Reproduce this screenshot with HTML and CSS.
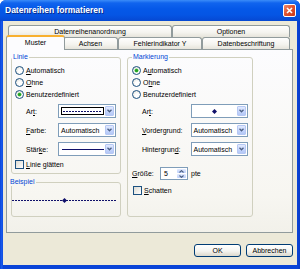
FILE: index.html
```html
<!DOCTYPE html>
<html lang="de">
<head>
    <meta charset="UTF-8">
    <title>Datenreihen formatieren</title>
    <link rel="stylesheet" href="styles.css">
</head>
<body>
    <div class="window">
        <div class="titlebar">
            <span class="title">Datenreihen formatieren</span>
            <div class="close">
                <svg width="7" height="7" viewBox="0 0 7 7"><path d="M1 1L6 6M6 1L1 6" stroke="#fff" stroke-width="1.6"/></svg>
            </div>
        </div>

        <div class="client">
            <div class="tabs">
                <div class="tab-row">
                    <div class="tab w-anordnung">Datenreihenanordnung</div>
                    <div class="tab w-optionen">Optionen</div>
                </div>
                <div class="tab-row">
                    <div class="tab active w-muster">Muster</div>
                    <div class="tab w-achsen">Achsen</div>
                    <div class="tab w-fehler">Fehlerindikator Y</div>
                    <div class="tab w-beschr">Datenbeschriftung</div>
                </div>
            </div>

            <div class="panel">
                <div class="col-left">
                    <fieldset class="group g-linie">
                        <legend>Linie</legend>
                        <div class="opt"><span class="radio"></span><span><u>A</u>utomatisch</span></div>
                        <div class="opt"><span class="radio"></span><span><u>O</u>hne</span></div>
                        <div class="opt"><span class="radio checked"></span><span>Benutzerdefiniert</span></div>

                        <div class="field first">
                            <span class="lbl">Ar<u>t</u>:</span>
                            <div class="combo">
                                <div class="val"><div class="focus"><div class="dots"></div></div></div>
                                <div class="drop"><svg width="5" height="4" viewBox="0 0 5 4"><path d="M0.5 0.8L2.5 2.8L4.5 0.8" fill="none" stroke="#4d6185" stroke-width="1.3"/></svg></div>
                            </div>
                        </div>
                        <div class="field">
                            <span class="lbl"><u>F</u>arbe:</span>
                            <div class="combo">
                                <div class="val">Automatisch</div>
                                <div class="drop"><svg width="5" height="4" viewBox="0 0 5 4"><path d="M0.5 0.8L2.5 2.8L4.5 0.8" fill="none" stroke="#4d6185" stroke-width="1.3"/></svg></div>
                            </div>
                        </div>
                        <div class="field">
                            <span class="lbl">Stär<u>k</u>e:</span>
                            <div class="combo">
                                <div class="val"><div class="solid"></div></div>
                                <div class="drop"><svg width="5" height="4" viewBox="0 0 5 4"><path d="M0.5 0.8L2.5 2.8L4.5 0.8" fill="none" stroke="#4d6185" stroke-width="1.3"/></svg></div>
                            </div>
                        </div>

                        <div class="opt check-row"><span class="check"></span><span><u>L</u>inie glätten</span></div>
                    </fieldset>

                    <fieldset class="group g-beispiel">
                        <legend>Beispiel</legend>
                        <div class="sample">
                            <div class="sample-line"></div>
                            <svg class="sample-mark" width="5" height="5" viewBox="0 0 5 5"><path d="M2.5 0L5 2.5L2.5 5L0 2.5Z" fill="#10106a"/></svg>
                        </div>
                    </fieldset>
                </div>

                <fieldset class="group g-mark">
                    <legend>Markierung</legend>
                    <div class="opt"><span class="radio checked"></span><span>A<u>u</u>tomatisch</span></div>
                    <div class="opt"><span class="radio"></span><span>O<u>h</u>ne</span></div>
                    <div class="opt"><span class="radio"></span><span>Benutzerdefiniert</span></div>

                    <div class="field first">
                        <span class="lbl">Ar<u>t</u>:</span>
                        <div class="combo">
                            <div class="val center"><svg width="5" height="5" viewBox="0 0 5 5"><path d="M2.5 0L5 2.5L2.5 5L0 2.5Z" fill="#10106a"/></svg></div>
                            <div class="drop"><svg width="5" height="4" viewBox="0 0 5 4"><path d="M0.5 0.8L2.5 2.8L4.5 0.8" fill="none" stroke="#4d6185" stroke-width="1.3"/></svg></div>
                        </div>
                    </div>
                    <div class="field">
                        <span class="lbl"><u>V</u>ordergrund:</span>
                        <div class="combo">
                            <div class="val">Automatisch</div>
                            <div class="drop"><svg width="5" height="4" viewBox="0 0 5 4"><path d="M0.5 0.8L2.5 2.8L4.5 0.8" fill="none" stroke="#4d6185" stroke-width="1.3"/></svg></div>
                        </div>
                    </div>
                    <div class="field">
                        <span class="lbl">Hintergrun<u>d</u>:</span>
                        <div class="combo">
                            <div class="val">Automatisch</div>
                            <div class="drop"><svg width="5" height="4" viewBox="0 0 5 4"><path d="M0.5 0.8L2.5 2.8L4.5 0.8" fill="none" stroke="#4d6185" stroke-width="1.3"/></svg></div>
                        </div>
                    </div>

                    <div class="size-row">
                        <span class="size-lbl"><u>G</u>röße:</span>
                        <div class="spin">
                            <div class="val">5</div>
                            <div class="spin-btns">
                                <div class="spin-btn"><svg width="5" height="3" viewBox="0 0 5 3"><path d="M0.5 2.5L2.5 0.6L4.5 2.5" fill="none" stroke="#4d6185" stroke-width="1.1"/></svg></div>
                                <div class="spin-btn"><svg width="5" height="3" viewBox="0 0 5 3"><path d="M0.5 0.5L2.5 2.4L4.5 0.5" fill="none" stroke="#4d6185" stroke-width="1.1"/></svg></div>
                            </div>
                        </div>
                        <span>pte</span>
                    </div>

                    <div class="opt check-row"><span class="check"></span><span><u>S</u>chatten</span></div>
                </fieldset>
            </div>

            <div class="buttons">
                <button class="xp-btn">OK</button>
                <button class="xp-btn">Abbrechen</button>
            </div>
        </div>
    </div>
</body>
</html>
```

FILE: styles.css
```css
* {
    box-sizing: border-box;
}

body {
    margin: 0;
    font-family: "Liberation Sans", Arial, sans-serif;
    font-size: 7px;
    color: #000;
    background: #fff;
}

.window {
    width: 300px;
    height: 269px;
    display: flex;
    flex-direction: column;
    background: linear-gradient(90deg, #0a44d8, #1a5ef0 2px, #0a44d8 3px, #0a44d8 297px, #0a3cc8);
    border-radius: 6px 6px 0 0;
    overflow: hidden;
}

.titlebar {
    height: 21px;
    flex: none;
    display: flex;
    align-items: center;
    justify-content: space-between;
    padding: 0 4px 1px 5px;
    background: linear-gradient(#3b8cf8 0, #1064ee 3px, #0558e8 9px, #0555e4 15px, #0648d2 21px);
}

.title {
    color: #fff;
    font-weight: bold;
    font-size: 8.5px;
    text-shadow: 1px 1px 0 #0a2a8a;
}

.close {
    width: 13px;
    height: 13px;
    border: 1px solid #fff;
    border-radius: 2px;
    background: linear-gradient(135deg, #f08b6e, #e0512e 50%, #c9381a);
    display: flex;
    align-items: center;
    justify-content: center;
}

.client {
    flex: 1;
    margin: 0 3px 4px;
    background: #ece9d8;
    display: flex;
    flex-direction: column;
}

/* tabs */
.tabs {
    padding: 4px 0 0 5px;
}

.tab-row {
    display: flex;
    height: 12px;
}

.tab {
    height: 12px;
    border: 1px solid #919b9c;
    border-bottom: none;
    border-radius: 3px 3px 0 0;
    background: linear-gradient(#fefefe, #f4f3ee 60%, #e6e4db);
    text-align: center;
    line-height: 11px;
    white-space: nowrap;
}

.tab.active {
    position: relative;
    z-index: 2;
    height: 15px;
    margin: -2px -2px 0;
    background: #fcfcfe;
    border-top: 2px solid #f8b030;
    line-height: 12px;
}

.w-anordnung { width: 164px; }
.w-optionen { width: 118px; }
.w-muster { width: 59px; }
.w-achsen { width: 55px; }
.w-fehler { width: 84px; }
.w-beschr { width: 88px; }

/* panel */
.panel {
    height: 184px;
    margin: 0 4px 0 3px;
    border: 1px solid #919b9c;
    background: linear-gradient(#fcfcfe, #f7f6f1 80%, #f2f1ea);
    display: flex;
    gap: 6px;
    padding: 3px 4px;
}

.col-left {
    width: 110px;
    display: flex;
    flex-direction: column;
    gap: 4px;
}

.group {
    margin: 0;
    padding: 0 3px;
    min-width: 0;
    border: 1px solid #d0d0bf;
    border-radius: 3px;
}

.group legend {
    padding: 0 1px;
    margin-left: -3px;
    color: #0046d5;
    line-height: 8px;
}

.g-linie {
    height: 121px;
    padding-top: 3px;
}

.g-beispiel {
    height: 39px;
    padding: 0;
}

.g-mark {
    width: 126px;
    height: 164px;
    padding: 3px 4px 0;
}

.g-mark legend {
    margin-left: 0;
}

.opt {
    display: flex;
    align-items: center;
    gap: 2px;
    height: 12px;
}

.radio {
    width: 9px;
    height: 9px;
    border: 1px solid #1c5180;
    border-radius: 50%;
    background: radial-gradient(circle at 60% 65%, #fff 30%, #dcdad2);
    display: flex;
    align-items: center;
    justify-content: center;
}

.radio.checked::after {
    content: "";
    width: 3px;
    height: 3px;
    border-radius: 50%;
    background: #21a121;
    box-shadow: 0 0 0 0.5px #5ac85a;
}

.check {
    width: 9px;
    height: 9px;
    border: 1px solid #1c5180;
    background: linear-gradient(135deg, #dcdad2, #fff);
}

.check-row {
    margin-top: 3px;
    height: 10px;
}

.field {
    display: flex;
    align-items: center;
    height: 14px;
    margin-top: 5px;
}

.field.first {
    margin-top: 4px;
}

.lbl {
    width: 43px;
    padding-left: 11px;
}

.g-mark .lbl {
    width: 59px;
    padding-left: 10px;
}

.combo {
    width: 58px;
    height: 14px;
    border: 1px solid #7f9db9;
    background: #fff;
    display: flex;
}

.combo .val {
    flex: 1;
    display: flex;
    align-items: center;
    padding-left: 2px;
    min-width: 0;
}

.combo .val.center {
    justify-content: center;
}

.drop {
    width: 9px;
    margin: 1px;
    border: 1px solid #b6c8f4;
    border-radius: 1px;
    background: linear-gradient(#e2eafe, #c3d3fb 60%, #b4c8f6);
    display: flex;
    align-items: center;
    justify-content: center;
}

.focus {
    width: 46px;
    height: 8px;
    border: 1px solid #000;
    display: flex;
    align-items: center;
    padding: 0 1px;
}

.dots {
    flex: 1;
    height: 1px;
    background: repeating-linear-gradient(90deg, #10106a 0 2px, transparent 2px 3px);
}

.solid {
    width: 42px;
    height: 1px;
    margin-left: 1px;
    background: #10106a;
}

/* groesse */
.size-row {
    display: flex;
    align-items: center;
    height: 13px;
    margin-top: 11px;
    gap: 3px;
}

.size-lbl {
    width: 25px;
}

.spin {
    width: 28px;
    height: 13px;
    border: 1px solid #7f9db9;
    background: #fff;
    display: flex;
}

.spin .val {
    flex: 1;
    padding-left: 3px;
    line-height: 11px;
}

.spin-btns {
    width: 9px;
    margin: 1px;
    display: flex;
    flex-direction: column;
    gap: 1px;
}

.spin-btn {
    flex: 1;
    border-radius: 1px;
    background: linear-gradient(#e2eafe, #bccffa);
    display: flex;
    align-items: center;
    justify-content: center;
}

.g-mark .check-row {
    margin-top: 5px;
    padding-left: 1px;
}

/* beispiel */
.sample {
    height: 28px;
    display: flex;
    align-items: center;
    padding-right: 3px;
    position: relative;
}

.sample-line {
    flex: 1;
    height: 1px;
    background: repeating-linear-gradient(90deg, #10106a 0 2px, transparent 2px 3px);
}

.sample-mark {
    position: absolute;
    left: 50px;
    top: 11.5px;
}

/* buttons */
.buttons {
    display: flex;
    justify-content: flex-end;
    gap: 5px;
    margin: 11px 4px 0 0;
}

.xp-btn {
    width: 47px;
    height: 13px;
    padding: 0;
    border: 1px solid #003c74;
    border-radius: 3px;
    background: linear-gradient(#fff, #f4f4f0 55%, #dcd8cc);
    font-family: inherit;
    font-size: 7px;
    color: #000;
}
```
